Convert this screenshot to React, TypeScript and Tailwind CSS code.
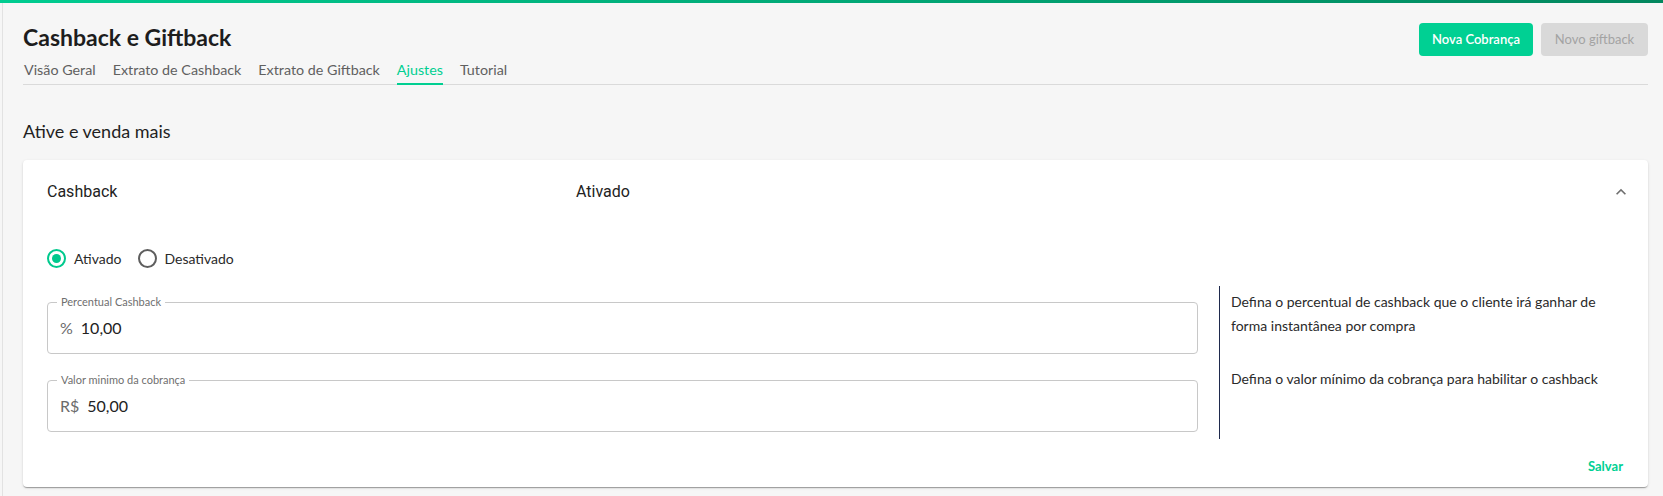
import { useState } from "react";

const tabs = [
  "Visão Geral",
  "Extrato de Cashback",
  "Extrato de Giftback",
  "Ajustes",
  "Tutorial",
];

const fields = [
  {
    label: "Percentual Cashback",
    prefix: "%",
    value: "10,00",
    help: "Defina o percentual de cashback que o cliente irá ganhar de forma instantânea por compra",
  },
  {
    label: "Valor minimo da cobrança",
    prefix: "R$",
    value: "50,00",
    help: "Defina o valor mínimo da cobrança para habilitar o cashback",
  },
];

const OutlinedInput = ({
  label,
  prefix,
  value,
}: {
  label: string;
  prefix: string;
  value: string;
}) => (
  <div className="relative h-[52px] rounded-[4px] border border-[#c8c8c8] flex items-center px-[12px] gap-[8px]">
    <span className="absolute -top-[8px] left-[9px] bg-white px-[4px] text-[11px] leading-[14px] text-[#6f6f6f]">
      {label}
    </span>
    <span className="text-[16px] text-[#6b6b6b]">{prefix}</span>
    <span className="text-[16px] text-[#222]">{value}</span>
  </div>
);

const Radio = ({ checked, label }: { checked: boolean; label: string }) => (
  <label className="flex items-center gap-[8px] cursor-pointer">
    <span
      className={
        checked
          ? "w-[19px] h-[19px] rounded-full border-2 border-[#00c98d] flex items-center justify-center"
          : "w-[19px] h-[19px] rounded-full border-2 border-[#5e5e5e]"
      }
    >
      {checked && <span className="w-[9px] h-[9px] rounded-full bg-[#00c98d]" />}
    </span>
    <span className="text-[14px] text-[#2a2a2a]">{label}</span>
  </label>
);

export default function App() {
  const [active, setActive] = useState(true);

  return (
    <div className="min-h-screen w-full bg-[#f6f6f6] font-['Lato',sans-serif]">
      <div className="h-[3px] bg-gradient-to-r from-[#00cc90] to-[#02875e]" />
      <div className="ml-[2px] border-l border-[#e2e2e2] pl-[20px] pr-[15px] pt-[20px] pb-[11px]">
        <div className="flex justify-between items-start">
          <h1 className="text-[23px] leading-[28px] font-bold text-[#1d1d1d]">
            Cashback e Giftback
          </h1>
          <div className="flex gap-[8px]">
            <button className="h-[33px] w-[114px] rounded-[4px] bg-[#00d093] text-white text-[13px] font-semibold">
              Nova Cobrança
            </button>
            <button className="h-[33px] w-[107px] rounded-[4px] bg-[#d9d9d9] text-[#a3a3a3] text-[13px]">
              Novo giftback
            </button>
          </div>
        </div>

        <div className="flex gap-[17px] border-b border-[#dadada] mt-[1px] pl-[1px]">
          {tabs.map((tab) => (
            <div
              key={tab}
              className={
                tab === "Ajustes"
                  ? "text-[14.3px] leading-[20px] pt-[3px] pb-[3px] text-[#00cf91] border-b-2 border-[#00cf91] -mb-px"
                  : "text-[14.3px] leading-[20px] pt-[3px] pb-[4px] text-[#606060]"
              }
            >
              {tab}
            </div>
          ))}
        </div>

        <h2 className="mt-[34px] text-[18px] leading-[24px] text-[#1f1f1f]">
          Ative e venda mais
        </h2>

        <div className="mt-[17px] bg-white rounded-[4px] shadow-[0_2px_1px_-1px_rgba(0,0,0,0.2),0_1px_1px_0_rgba(0,0,0,0.14),0_1px_3px_0_rgba(0,0,0,0.12)]">
          <div className="h-[64px] flex items-center px-[24px] font-['Roboto',sans-serif] text-[16px] text-[#222]">
            <div className="w-[529px]">Cashback</div>
            <div className="flex-1">Ativado</div>
            <svg
              viewBox="0 0 24 24"
              className="w-[20px] h-[20px] mr-[-7px] text-[#6f6f6f]"
              fill="currentColor"
            >
              <path d="M12 8l-6 6 1.41 1.41L12 10.83l4.59 4.58L18 14z" />
            </svg>
          </div>

          <div className="px-[24px]">
            <div className="flex items-center gap-[16px] h-[24px] mt-[22px]">
              <div onClick={() => setActive(true)}>
                <Radio checked={active} label="Ativado" />
              </div>
              <div onClick={() => setActive(false)}>
                <Radio checked={!active} label="Desativado" />
              </div>
            </div>

            <div className="flex mt-[16px]">
              <div className="w-[1151px] pt-[16px] flex flex-col gap-[26px]">
                {fields.map((field) => (
                  <OutlinedInput
                    key={field.label}
                    label={field.label}
                    prefix={field.prefix}
                    value={field.value}
                  />
                ))}
              </div>
              <div className="ml-[21px] h-[153px] border-l-[1.5px] border-[#1f2a4d] pl-[11px] pt-[4px] flex-1 flex flex-col gap-[29px]">
                {fields.map((field) => (
                  <p
                    key={field.label}
                    className="text-[14px] leading-[24px] text-[#2a2a2a] max-w-[380px]"
                  >
                    {field.help}
                  </p>
                ))}
              </div>
            </div>
          </div>

          <div className="flex justify-end pt-[13px] pb-[5px] pr-[17px]">
            <button className="h-[30px] px-[8px] text-[13px] font-bold text-[#00d093]">
              Salvar
            </button>
          </div>
        </div>
      </div>
    </div>
  );
}
